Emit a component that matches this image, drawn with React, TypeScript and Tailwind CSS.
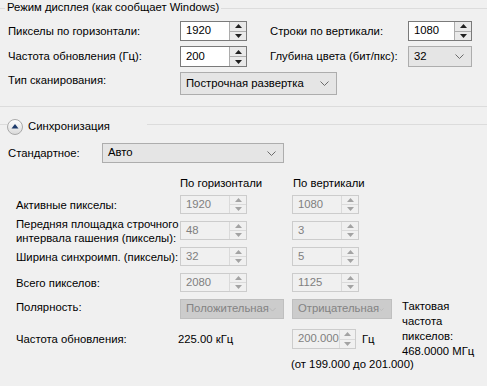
const FONT = "font-['Liberation_Sans','Arial',sans-serif]"

function Arrow({ up, color }: { up?: boolean; color: string }) {
  return (
    <svg width="7" height="4" viewBox="0 0 7 4" className="block">
      <path d={up ? 'M3.5 0L7 4H0z' : 'M0 0H7L3.5 4z'} fill={color} />
    </svg>
  )
}

function Spin({ value, width, disabled }: { value: string; width: string; disabled?: boolean }) {
  const arrow = disabled ? '#a3a3a3' : '#1f1f1f'
  return (
    <div
      className={`flex shrink-0 h-full border ${width} ${
        disabled ? 'border-[#cccccc] bg-[#f0f0f0] text-[#7f7f7f]' : 'border-[#7a7a7a] bg-white text-black'
      }`}
    >
      <div className="flex-1 flex items-center pl-[5px] leading-none whitespace-nowrap">{value}</div>
      <div className={`w-[17px] flex flex-col border-l ${disabled ? 'border-[#dadada]' : 'border-[#acacac]'}`}>
        <div
          className={`flex-1 flex items-center justify-center border-b ${
            disabled ? 'border-[#dadada] bg-[#f0f0f0]' : 'border-[#acacac] bg-[#e9e9e9]'
          }`}
        >
          <Arrow up color={arrow} />
        </div>
        <div className={`flex-1 flex items-center justify-center ${disabled ? 'bg-[#f0f0f0]' : 'bg-[#e9e9e9]'}`}>
          <Arrow color={arrow} />
        </div>
      </div>
    </div>
  )
}

function Combo({ value, width, disabled }: { value: string; width: string; disabled?: boolean }) {
  return (
    <div
      className={`flex shrink-0 items-center h-full border pl-[5px] pr-[7px] ${width} ${
        disabled ? 'border-[#bfbfbf] bg-[#cccccc] text-[#838383]' : 'border-[#adadad] bg-[#e5e5e5] text-black'
      }`}
    >
      <span className="flex-1 leading-none whitespace-nowrap">{value}</span>
      <svg width="9" height="5" viewBox="0 0 9 5" className="block">
        <path d="M0.5 0.5L4.5 4.5L8.5 0.5" fill="none" stroke={disabled ? '#b3b3b3' : '#6b6b6b'} strokeWidth="1" />
      </svg>
    </div>
  )
}

function GroupTitle({ children }: { children: React.ReactNode }) {
  return (
    <div className="flex items-center h-[16px]">
      <div className="w-[5px] h-px bg-[#dcdcdc]" />
      <span className="px-[2px] leading-none whitespace-nowrap">{children}</span>
      <div className="flex-1 h-px bg-[#dcdcdc]" />
    </div>
  )
}

function CollapseIcon() {
  return (
    <svg width="16" height="16" viewBox="0 0 16 16" className="block">
      <defs>
        <linearGradient id="cg" x1="0" y1="0" x2="0" y2="1">
          <stop offset="0" stopColor="#ffffff" />
          <stop offset="1" stopColor="#d9d9d9" />
        </linearGradient>
      </defs>
      <circle cx="8" cy="8" r="7.5" fill="url(#cg)" stroke="#a9a9a9" />
      <path d="M8 5L11.5 9.5H4.5z" fill="#1c3a6b" />
    </svg>
  )
}

const SYNC_ROWS: { label: React.ReactNode; h: string; v: string }[] = [
  { label: 'Активные пикселы:', h: '1920', v: '1080' },
  {
    label: (
      <>
        Передняя площадка строчного
        <br />
        интервала гашения (пикселы):
      </>
    ),
    h: '48',
    v: '3',
  },
  { label: 'Ширина синхроимп. (пикселы):', h: '32', v: '5' },
  { label: 'Всего пикселов:', h: '2080', v: '1125' },
]

export default function App() {
  return (
    <div className={`w-[487px] h-[386px] overflow-hidden bg-[#f0f0f0] text-black text-[11.3px] ${FONT}`}>
      {/* Display mode */}
      <GroupTitle>Режим дисплея (как сообщает Windows)</GroupTitle>

      <div className="mt-[5px] flex items-center h-[20px] pl-[8px] whitespace-nowrap">
        <span className="w-[172px] shrink-0">Пикселы по горизонтали:</span>
        <Spin value="1920" width="w-[67px]" />
        <span className="ml-[23px] w-[138px] shrink-0">Строки по вертикали:</span>
        <Spin value="1080" width="w-[64px]" />
      </div>

      <div className="mt-[5px] flex items-center h-[21px] pl-[8px] whitespace-nowrap">
        <span className="w-[172px] shrink-0">Частота обновления (Гц):</span>
        <Spin value="200" width="w-[67px]" />
        <span className="ml-[23px] w-[138px] shrink-0">Глубина цвета (бит/пкс):</span>
        <Combo value="32" width="w-[64px]" />
      </div>

      <div className="mt-[5px] flex items-center h-[23px] pl-[8px] whitespace-nowrap">
        <span className="w-[172px] shrink-0 self-start">Тип сканирования:</span>
        <Combo value="Построчная развертка" width="w-[157px]" />
      </div>

      <div className="mt-[11px] h-px bg-[#dcdcdc]" />

      {/* Sync */}
      <div className="mt-[11px] flex items-center h-[18px]">
        <div className="w-[7px] h-px bg-[#dcdcdc] mb-[5px]" />
        <CollapseIcon />
        <span className="ml-[5px] w-[119px] leading-none whitespace-nowrap">Синхронизация</span>
        <div className="flex-1 h-px bg-[#dcdcdc] mb-[5px]" />
      </div>

      <div className="mt-[7px] flex items-center h-[20px] pl-[8px]">
        <span className="w-[94px] shrink-0">Стандартное:</span>
        <Combo value="Авто" width="w-[182px]" />
      </div>

      <div className="mt-[13px] flex items-center h-[14px] pl-[180px] whitespace-nowrap">
        <span className="w-[113px]">По горизонтали</span>
        <span>По вертикали</span>
      </div>

      <div className="mt-[5px] flex flex-col gap-[7px] pl-[16px]">
        {SYNC_ROWS.map((r, i) => (
          <div key={i} className="flex items-center h-[19px]">
            <span className="w-[164px] shrink-0 leading-[14px] whitespace-nowrap">{r.label}</span>
            <Spin value={r.h} width="w-[67px]" disabled />
            <div className="w-[45px] shrink-0" />
            <Spin value={r.v} width="w-[67px]" disabled />
          </div>
        ))}
      </div>

      <div className="mt-[7px] flex pl-[16px] whitespace-nowrap">
        <div className="w-[376px] shrink-0 flex flex-col">
          <div className="flex items-center h-[20px]">
            <span className="w-[164px] shrink-0 self-start">Полярность:</span>
            <Combo value="Положительная" width="w-[104px]" disabled />
            <div className="w-[8px] shrink-0" />
            <Combo value="Отрицательная" width="w-[100px]" disabled />
          </div>
          <div className="mt-[10px] flex items-center h-[20px]">
            <span className="w-[162px] shrink-0">Частота обновления:</span>
            <span className="w-[114px] shrink-0">225.00 кГц</span>
            <Spin value="200.000" width="w-[64px]" disabled />
            <span className="ml-[6px]">Гц</span>
          </div>
          <div className="mt-[10px] pl-[275px] leading-none">(от 199.000 до 201.000)</div>
        </div>
        <div className="ml-[10px] leading-[15px]">
          Тактовая
          <br />
          частота
          <br />
          пикселов:
          <br />
          468.0000 МГц
        </div>
      </div>
    </div>
  )
}
